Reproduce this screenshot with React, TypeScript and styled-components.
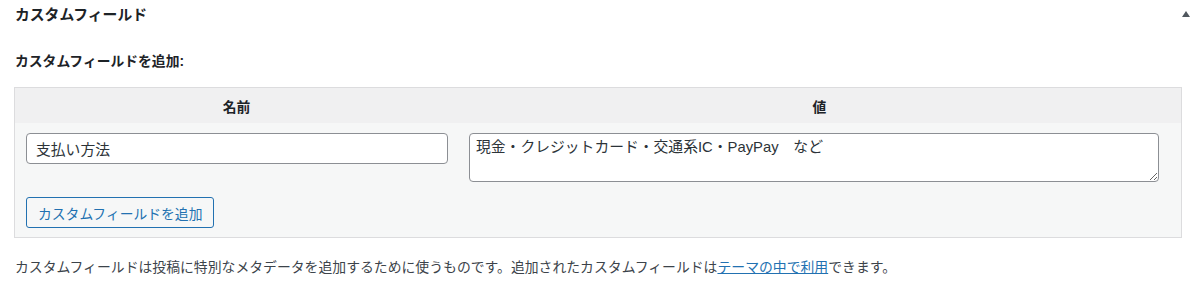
import React from "react";
import styled, { createGlobalStyle } from "styled-components";

const Global = createGlobalStyle`
  html, body { margin: 0; padding: 0; background: #fff; }
  body {
    font-family: "Liberation Sans", "Noto Sans CJK JP", sans-serif;
    color: #3c434a;
  }
  * { box-sizing: border-box; }
`;

const Box = styled.section`
  width: 1200px;
  padding: 0 18px 0 14px;
`;

const TitleBar = styled.div`
  display: flex;
  align-items: center;
  justify-content: space-between;
  height: 30px;
  padding-left: 1px;
`;

const Title = styled.h2`
  margin: 0;
  font-size: 14.8px;
  line-height: 20px;
  font-weight: 700;
  color: #1d2327;
`;

const Toggle = styled.span`
  width: 0;
  height: 0;
  margin-right: -8px;
  margin-bottom: 2px;
  border-left: 4px solid transparent;
  border-right: 4px solid transparent;
  border-bottom: 6px solid #50575e;
`;

const SubTitle = styled.p`
  margin: 22px 0 15px 1px;
  font-size: 13.8px;
  line-height: 20px;
  font-weight: 700;
  color: #1d2327;
`;

const Table = styled.div`
  border: 1px solid #dcdcde;
  background: #f6f7f7;
  display: grid;
  grid-template-columns: 443px 1fr;
`;

const HeadCell = styled.div`
  height: 35px;
  background: #f0f0f1;
  display: flex;
  align-items: center;
  justify-content: center;
  font-size: 13.8px;
  font-weight: 700;
  color: #1d2327;
`;

const Cell = styled.div<{ $right?: number }>`
  padding: 10px ${(p) => p.$right ?? 10}px 0 11px;
`;

const TextInput = styled.input`
  display: block;
  width: 100%;
  height: 31px;
  border: 1px solid #8c8f94;
  border-radius: 4px;
  padding: 0 9px;
  font-family: "Liberation Sans", "Noto Sans CJK JP", sans-serif;
  font-size: 14.8px;
  color: #2c3338;
  background: #fff;
  outline: none;
`;

const TextArea = styled.textarea`
  display: block;
  width: 100%;
  height: 49px;
  border: 1px solid #8c8f94;
  border-radius: 4px;
  padding: 3px 6px;
  font-family: "Liberation Sans", "Noto Sans CJK JP", sans-serif;
  font-size: 14.8px;
  line-height: 21px;
  color: #2c3338;
  background: #fff;
  outline: none;
`;

const ButtonRow = styled.div`
  grid-column: 1 / -1;
  padding: 15px 0 9px 11px;
`;

const Button = styled.button`
  height: 31px;
  padding: 0 11px;
  border: 1px solid #2271b1;
  border-radius: 3px;
  background: #f6f7f7;
  color: #2271b1;
  font-family: "Liberation Sans", "Noto Sans CJK JP", sans-serif;
  font-size: 13.8px;
  cursor: pointer;
`;

const Note = styled.p`
  margin: 19px 0 0 1px;
  font-size: 13.85px;
  line-height: 20px;
  color: #3c434a;
`;

const Link = styled.a`
  color: #2271b1;
  text-decoration: underline;
`;

export default function App() {
  return (
    <>
      <Global />
      <Box>
        <TitleBar>
          <Title>カスタムフィールド</Title>
          <Toggle />
        </TitleBar>
        <SubTitle>カスタムフィールドを追加:</SubTitle>
        <Table>
          <HeadCell>名前</HeadCell>
          <HeadCell>値</HeadCell>
          <Cell>
            <TextInput defaultValue="支払い方法" />
          </Cell>
          <Cell $right={22}>
            <TextArea defaultValue={"現金・クレジットカード・交通系IC・PayPay　など"} />
          </Cell>
          <ButtonRow>
            <Button>カスタムフィールドを追加</Button>
          </ButtonRow>
        </Table>
        <Note>
          カスタムフィールドは投稿に特別なメタデータを追加するために使うものです。追加されたカスタムフィールドは
          <Link href="#">テーマの中で利用</Link>できます。
        </Note>
      </Box>
    </>
  );
}
